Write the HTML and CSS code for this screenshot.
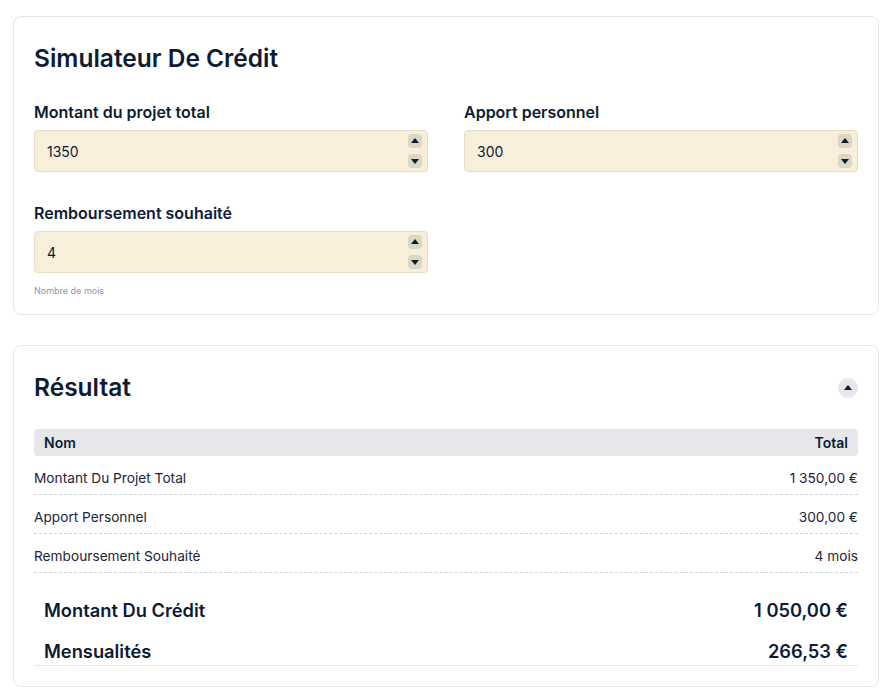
FILE: index.html
```html
<!DOCTYPE html>
<html lang="fr">
<head>
    <meta charset="UTF-8">
    <meta name="viewport" content="width=device-width, initial-scale=1.0">
    <title>Simulateur De Crédit</title>
    <link rel="stylesheet" href="styles.css">
</head>
<body>

    <div class="card">
        <h1 class="card-title">Simulateur De Crédit</h1>

        <div class="form-grid">
            <div class="form-group">
                <label for="montant">Montant du projet total</label>
                <div class="number-field">
                    <input type="text" id="montant" value="1350">
                    <div class="stepper">
                        <span class="step up"></span>
                        <span class="step down"></span>
                    </div>
                </div>
            </div>
            <div class="form-group">
                <label for="apport">Apport personnel</label>
                <div class="number-field">
                    <input type="text" id="apport" value="300">
                    <div class="stepper">
                        <span class="step up"></span>
                        <span class="step down"></span>
                    </div>
                </div>
            </div>
            <div class="form-group">
                <label for="duree">Remboursement souhaité</label>
                <div class="number-field">
                    <input type="text" id="duree" value="4">
                    <div class="stepper">
                        <span class="step up"></span>
                        <span class="step down"></span>
                    </div>
                </div>
                <div class="help">Nombre de mois</div>
            </div>
        </div>
    </div>

    <div class="card result-card">
        <div class="card-head">
            <h2 class="card-title">Résultat</h2>
            <button class="collapse"><span class="tri-up"></span></button>
        </div>

        <div class="table-head">
            <span>Nom</span>
            <span>Total</span>
        </div>
        <div class="row">
            <span>Montant Du Projet Total</span>
            <span>1 350,00 €</span>
        </div>
        <div class="row">
            <span>Apport Personnel</span>
            <span>300,00 €</span>
        </div>
        <div class="row">
            <span>Remboursement Souhaité</span>
            <span>4 mois</span>
        </div>

        <div class="totals">
            <div class="total-row">
                <span>Montant Du Crédit</span>
                <span>1 050,00 €</span>
            </div>
            <div class="total-row">
                <span>Mensualités</span>
                <span>266,53 €</span>
            </div>
        </div>
    </div>

</body>
</html>
```

FILE: styles.css
```css
body {
    font-family: Inter, 'Noto Sans', sans-serif;
    background-color: #ffffff;
    color: #0d1b33;
    margin: 0;
    padding: 16px 16px 0 13px;
}
.card {
    border: 1px solid #e3e6ea;
    border-radius: 8px;
    padding: 24px 20px 18px 20px;
    margin-bottom: 30px;
}
.result-card {
    padding-bottom: 20px;
}
.card-title {
    font-size: 24.5px;
    font-weight: 600;
    line-height: 35px;
    margin: 0 0 26px 0;
    color: #0d1b33;
}
.form-grid {
    display: grid;
    grid-template-columns: 1fr 1fr;
    column-gap: 36px;
    row-gap: 31px;
}
.form-group label {
    display: block;
    font-size: 16px;
    font-weight: 600;
    line-height: 20px;
    margin-bottom: 8px;
}
.number-field {
    display: flex;
    align-items: center;
    height: 42px;
    box-sizing: border-box;
    background-color: #f8efdb;
    border: 1px solid #e6ddc4;
    border-radius: 4px;
    padding: 0 5px 0 12px;
}
.number-field input {
    flex: 1;
    border: none;
    background: transparent;
    font-family: inherit;
    font-size: 14px;
    color: #0d1b33;
    padding: 0;
    outline: none;
}
.stepper {
    display: flex;
    flex-direction: column;
    gap: 6px;
}
.step {
    width: 14px;
    height: 14px;
    border-radius: 4px;
    background-color: #dcd6c5;
    position: relative;
}
.step::after {
    content: "";
    position: absolute;
    left: 3px;
    width: 0;
    height: 0;
    border-left: 4px solid transparent;
    border-right: 4px solid transparent;
}
.step.up::after {
    top: 4px;
    border-bottom: 5px solid #0d1b33;
}
.step.down::after {
    top: 5px;
    border-top: 5px solid #0d1b33;
}
.help {
    font-size: 9px;
    color: #8f98a6;
    margin-top: 12px;
}
.card-head {
    display: flex;
    justify-content: space-between;
    align-items: center;
    margin-bottom: 24px;
}
.card-head .card-title {
    margin: 0;
}
.collapse {
    width: 20px;
    height: 20px;
    border-radius: 50%;
    border: none;
    background-color: #e5e7eb;
    padding: 0;
    display: flex;
    align-items: center;
    justify-content: center;
}
.tri-up {
    width: 0;
    height: 0;
    border-left: 4px solid transparent;
    border-right: 4px solid transparent;
    border-bottom: 5px solid #0d1b33;
    margin-bottom: 1px;
}
.table-head {
    display: flex;
    justify-content: space-between;
    background-color: #e5e7eb;
    border-radius: 4px;
    padding: 0 10px;
    height: 27px;
    align-items: center;
    font-size: 14px;
    font-weight: 600;
}
.row {
    display: flex;
    justify-content: space-between;
    align-items: center;
    line-height: 16px;
    padding: 14px 0 8px 0;
    border-bottom: 1px dashed #cfd3d9;
    font-size: 13.7px;
    color: #1b2638;
}
.totals {
    display: flex;
    flex-direction: column;
    gap: 13px;
    border-bottom: 1px solid #e3e6ea;
    padding: 23px 10px 0 10px;
}
.total-row {
    display: flex;
    justify-content: space-between;
    align-items: center;
    height: 28px;
    font-size: 18.3px;
    font-weight: 600;
}
```
